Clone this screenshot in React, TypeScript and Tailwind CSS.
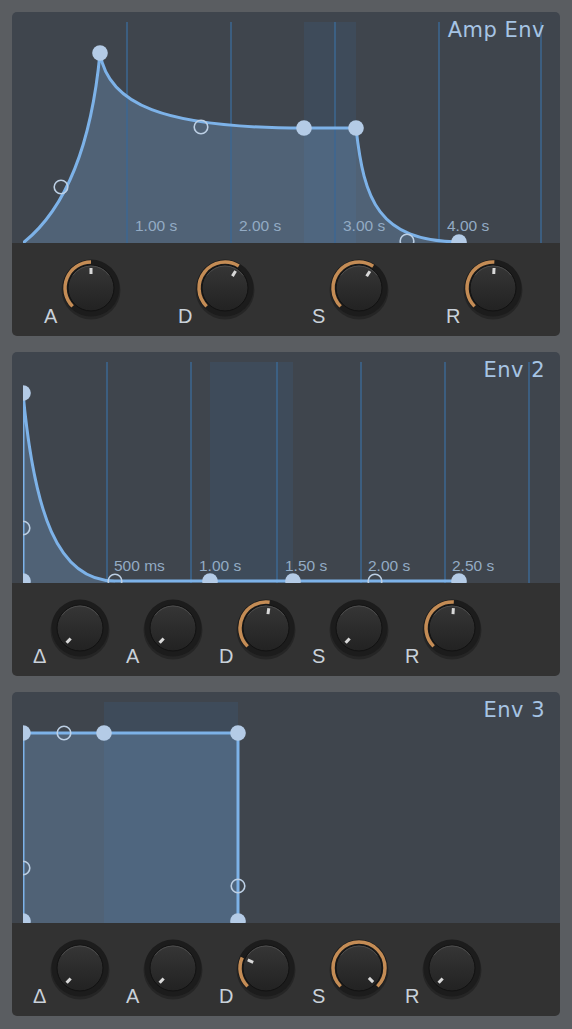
import { useId } from "react";

const FONT = "'DejaVu Sans', 'Liberation Sans', sans-serif";
const LABEL_FONT = "'Liberation Sans', Arial, sans-serif";

type Pt = [number, number];

type GraphProps = {
  band: [number, number];
  grid: number[];
  ticks: { x: number; t: string }[];
  fill: string;
  curve: string;
  filled: Pt[];
  hollow: Pt[];
};

function Graph({ band, grid, ticks, fill, curve, filled, hollow }: GraphProps) {
  const id = useId();
  return (
    <svg width="548" height="231" viewBox="0 0 548 231" className="block">
      <defs>
        <clipPath id={id}>
          <rect x="11" y="0" width="537" height="231" />
        </clipPath>
      </defs>
      <g clipPath={`url(#${id})`}>
        <rect x={band[0]} y="10" width={band[1] - band[0]} height="221" fill="rgba(58,100,145,0.2)" />
        <path d={fill} fill="rgba(126,178,230,0.27)" />
        {grid.map((x) => (
          <line key={x} x1={x} y1="10" x2={x} y2="231" stroke="#3d6792" strokeWidth="1.5" />
        ))}
        {ticks.map((t) => (
          <text key={t.t} x={t.x} y="219" fill="#93abc4" fontSize="15.5" style={{ fontFamily: LABEL_FONT }}>
            {t.t}
          </text>
        ))}
        <path d={curve} fill="none" stroke="#7db2e8" strokeWidth="3" strokeLinejoin="round" />
        {filled.map(([x, y], i) => (
          <circle key={"f" + i} cx={x} cy={y} r="7.8" fill="#b4cbe6" />
        ))}
        {hollow.map(([x, y], i) => (
          <circle key={"h" + i} cx={x} cy={y} r="6.8" fill="none" stroke="#bccfe4" strokeWidth="1.6" />
        ))}
      </g>
    </svg>
  );
}

function Knob({ angle, arc }: { angle: number; arc: boolean }) {
  const id = useId();
  const pt = (r: number, a: number) => {
    const rad = (a * Math.PI) / 180;
    return `${30 + r * Math.sin(rad)} ${30 - r * Math.cos(rad)}`;
  };
  const large = angle + 135 > 180 ? 1 : 0;
  return (
    <svg width="60" height="60" viewBox="0 0 60 60" className="block shrink-0 overflow-visible">
      <defs>
        <linearGradient id={id} x1="0" y1="0" x2="0" y2="1">
          <stop offset="0" stopColor="#363636" />
          <stop offset="1" stopColor="#222222" />
        </linearGradient>
      </defs>
      <circle cx="30" cy="32" r="29.5" fill="#000" opacity="0.25" />
      <circle cx="30" cy="30" r="28.5" fill="#1c1c1c" />
      {arc && (
        <path
          d={`M ${pt(26, -135)} A 26 26 0 ${large} 1 ${pt(26, angle)}`}
          fill="none"
          stroke="#c48c55"
          strokeWidth="3.5"
        />
      )}
      <circle cx="30" cy="30" r="23" fill={`url(#${id})`} stroke="#111" strokeWidth="1" />
      <path d={`M ${pt(22, -55)} A 22 22 0 0 1 ${pt(22, 55)}`} fill="none" stroke="#4c4c4c" strokeWidth="1" />
      <rect x="28.5" y="10" width="3" height="6" fill="#d9d9d9" transform={`rotate(${angle} 30 30)`} />
    </svg>
  );
}

type KnobDef = { label: string; angle: number; arc: boolean };

function Panel({
  title,
  graph,
  knobs,
  padLeft,
  gap,
}: {
  title: string;
  graph: GraphProps;
  knobs: KnobDef[];
  padLeft: string;
  gap: string;
}) {
  return (
    <div className="rounded-[5px] overflow-hidden">
      <div className="relative h-[231px] bg-[#3f454d]">
        <Graph {...graph} />
        <div
          className="absolute top-[8px] right-[15px] text-[21px] leading-[20px] tracking-[0.5px] text-[#a6c4e4]"
          style={{ fontFamily: FONT }}
        >
          {title}
        </div>
      </div>
      <div className={`flex h-[93px] bg-[#323232] pt-[15px] ${padLeft} ${gap}`}>
        {knobs.map((k) => (
          <div key={k.label} className="flex items-start">
            <span
              className="w-[17px] mt-[49px] text-[20px] leading-[18px] text-[#c9d1da]"
              style={{ fontFamily: LABEL_FONT }}
            >
              {k.label}
            </span>
            <Knob angle={k.angle} arc={k.arc} />
          </div>
        ))}
      </div>
    </div>
  );
}

const ampCurve = "M11 231 Q75 180 88 41 C96 92 150 116 292 116 L344 116 C352 188 366 229 447 230";

const amp: GraphProps = {
  band: [292, 344],
  grid: [115, 219, 323, 427, 529],
  ticks: [
    { x: 123, t: "1.00 s" },
    { x: 227, t: "2.00 s" },
    { x: 331, t: "3.00 s" },
    { x: 435, t: "4.00 s" },
  ],
  curve: ampCurve,
  fill: ampCurve + " L447 231 Z",
  filled: [
    [88, 41],
    [292, 116],
    [344, 116],
    [447, 230],
  ],
  hollow: [
    [49, 175],
    [189, 115],
    [395, 229],
  ],
};

const env2: GraphProps = {
  band: [198, 281],
  grid: [95, 179, 265, 349, 433, 517],
  ticks: [
    { x: 102, t: "500 ms" },
    { x: 187, t: "1.00 s" },
    { x: 273, t: "1.50 s" },
    { x: 356, t: "2.00 s" },
    { x: 440, t: "2.50 s" },
  ],
  curve: "M11 229 L11 41 C22 160 45 229 103 229 L447 229",
  fill: "M11 231 L11 41 C22 160 45 229 103 229 L103 231 Z",
  filled: [
    [11, 41],
    [11, 229],
    [198, 229],
    [281, 229],
    [447, 229],
  ],
  hollow: [
    [11, 176],
    [103, 229],
    [363, 229],
  ],
};

const env3: GraphProps = {
  band: [92, 226],
  grid: [],
  ticks: [],
  curve: "M11 231 L11 41 L226 41 L226 231",
  fill: "M11 231 L11 41 L226 41 L226 231 Z",
  filled: [
    [11, 41],
    [92, 41],
    [226, 41],
    [11, 229],
    [226, 229],
  ],
  hollow: [
    [52, 41],
    [11, 176],
    [226, 194],
  ],
};

export default function App() {
  return (
    <div className="min-h-screen bg-[#5a5d61] p-[12px] flex flex-col gap-[16px]">
      <Panel
        title="Amp Env"
        graph={amp}
        padLeft="pl-[32px]"
        gap="gap-[57px]"
        knobs={[
          { label: "A", angle: 0, arc: true },
          { label: "D", angle: 32, arc: true },
          { label: "S", angle: 33, arc: true },
          { label: "R", angle: 3, arc: true },
        ]}
      />
      <Panel
        title="Env 2"
        graph={env2}
        padLeft="pl-[21px]"
        gap="gap-[16px]"
        knobs={[
          { label: "Δ", angle: -138, arc: false },
          { label: "A", angle: -138, arc: false },
          { label: "D", angle: 8, arc: true },
          { label: "S", angle: -138, arc: false },
          { label: "R", angle: 4, arc: true },
        ]}
      />
      <Panel
        title="Env 3"
        graph={env3}
        padLeft="pl-[21px]"
        gap="gap-[16px]"
        knobs={[
          { label: "Δ", angle: -138, arc: false },
          { label: "A", angle: -138, arc: false },
          { label: "D", angle: -66, arc: true },
          { label: "S", angle: 135, arc: true },
          { label: "R", angle: -138, arc: false },
        ]}
      />
    </div>
  );
}
